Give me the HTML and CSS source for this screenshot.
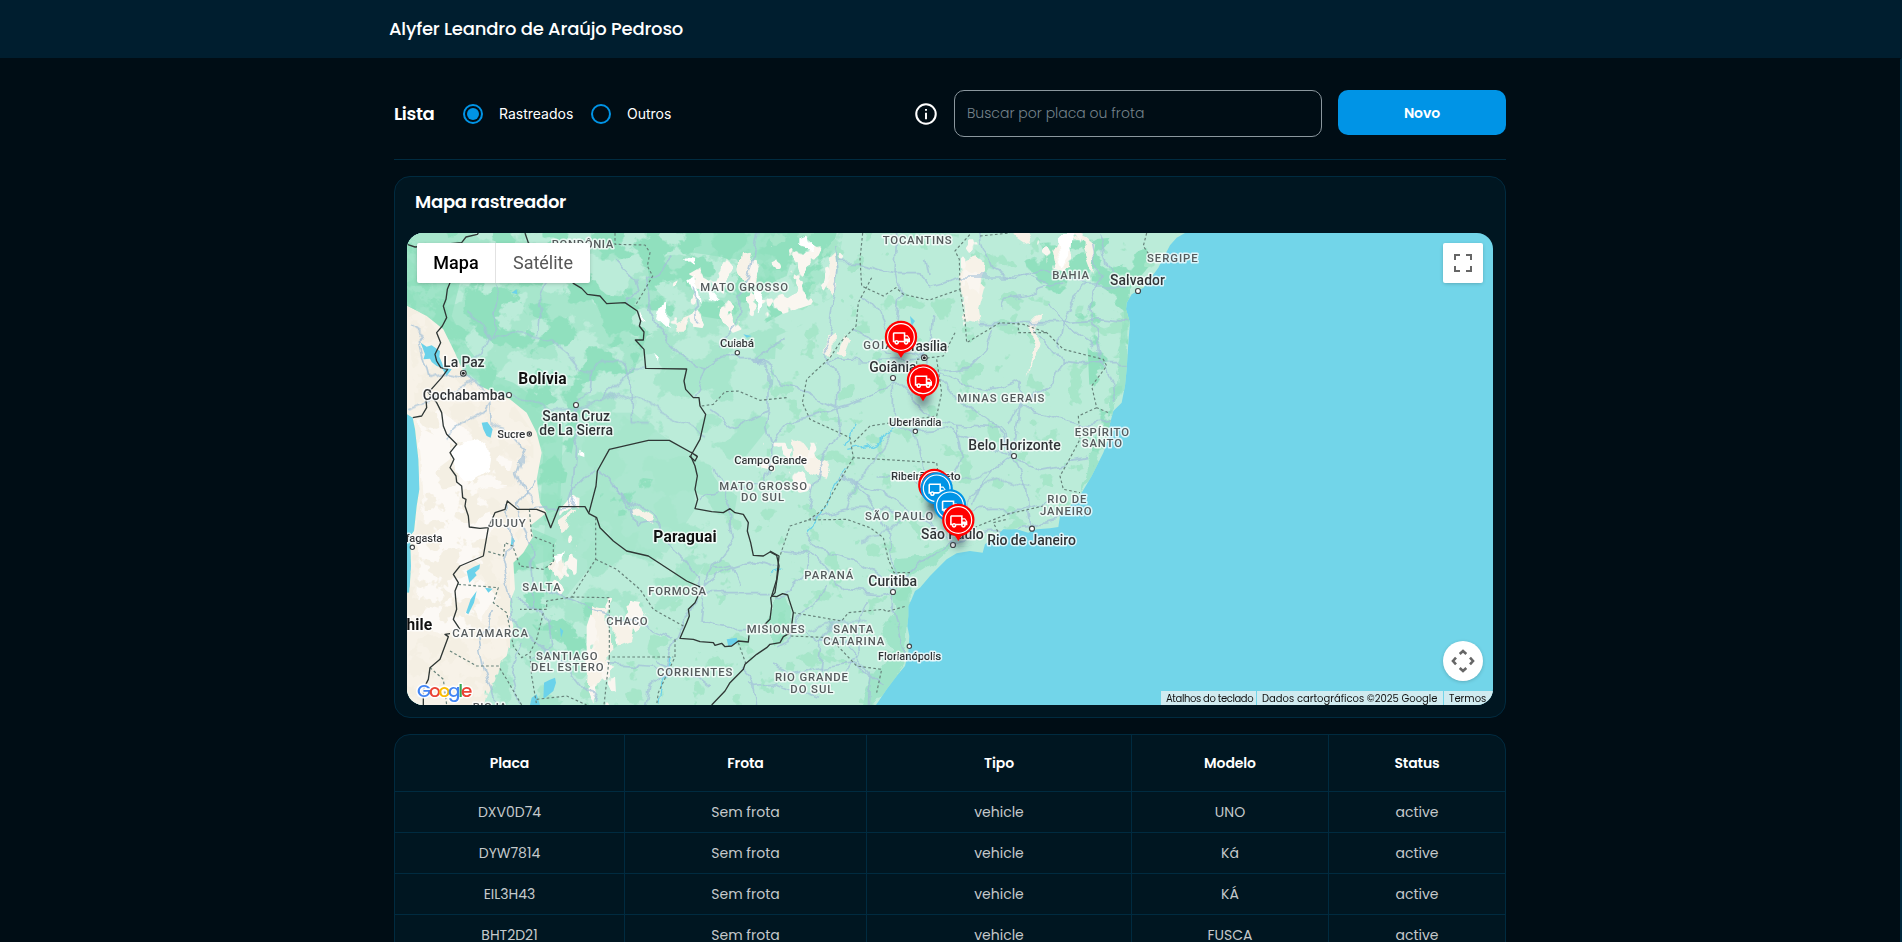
FILE: index.html
```html
<!DOCTYPE html>
<html lang="pt-BR">
<head>
<meta charset="utf-8">
<title>Mapa rastreador</title>
<link rel="stylesheet" href="styles.css">
</head>
<body>
<header class="topbar"><div class="topbar-inner"><span class="user-name">Alyfer Leandro de Araújo Pedroso</span></div></header>
<div class="scroll-track"></div>
<main class="page">
  <section class="toolbar">
    <h1 class="toolbar-title">Lista</h1>
    <div class="radio-group">
      <label class="radio"><span class="radio-dot radio-on"></span><span class="radio-text">Rastreados</span></label>
      <label class="radio"><span class="radio-dot"></span><span class="radio-text radio-text-b">Outros</span></label>
    </div>
    <svg class="info" viewBox="0 0 24 24"><circle cx="12" cy="12" r="9" fill="none" stroke="#fff" stroke-width="1.900"/><path d="M11.100 7.300h1.800v1.800h-1.800zM11.100 10.800h1.800v6h-1.800z" fill="#fff"/></svg>
    <div class="search"><span class="search-hint">Buscar por placa ou frota</span></div>
    <button class="btn"><span>Novo</span></button>
  </section>

  <section class="map-card">
    <h2 class="map-title">Mapa rastreador</h2>
    <div class="map">
      <svg class="map-canvas" viewBox="21 21 3258 1416">
        <defs>
          <filter id="mid" x="0" y="0" width="1" height="1" color-interpolation-filters="sRGB">
            <feTurbulence type="fractalNoise" baseFrequency=".009 .010" numOctaves="5" seed="8"/>
            <feColorMatrix values="0 0 0 0 .655  0 0 0 0 .902  0 0 0 0 .8  24 0 0 0 -11.7"/>
            <feComposite in2="SourceGraphic" operator="in"/>
          </filter>
          <filter id="deep" x="0" y="0" width="1" height="1" color-interpolation-filters="sRGB">
            <feTurbulence type="fractalNoise" baseFrequency=".010 .011" numOctaves="5" seed="21"/>
            <feColorMatrix values="0 0 0 0 .565  0 0 0 0 .88  0 0 0 0 .745  24 0 0 0 -12.4"/>
            <feComposite in2="SourceGraphic" operator="in"/>
          </filter>
          <filter id="sparse" x="0" y="0" width="1" height="1" color-interpolation-filters="sRGB">
            <feTurbulence type="fractalNoise" baseFrequency=".015" numOctaves="4" seed="5"/>
            <feColorMatrix values="0 0 0 0 .65  0 0 0 0 .9  0 0 0 0 .79  24 0 0 0 -15.3"/>
            <feComposite in2="SourceGraphic" operator="in"/>
          </filter>
          <filter id="sand" x="0" y="0" width="1" height="1" color-interpolation-filters="sRGB">
            <feTurbulence type="fractalNoise" baseFrequency=".022 .015" numOctaves="3" seed="3"/>
            <feColorMatrix values="0 0 0 0 .98  0 0 0 0 .965  0 0 0 0 .94  26 0 0 0 -14.8"/>
            <feComposite in2="SourceGraphic" operator="in"/>
          </filter>
          <filter id="dune" x="0" y="0" width="1" height="1" color-interpolation-filters="sRGB">
            <feTurbulence type="fractalNoise" baseFrequency=".017" numOctaves="4" seed="11"/>
            <feColorMatrix values="0 0 0 0 .957  0 0 0 0 .937  0 0 0 0 .89  24 0 0 0 -12"/>
            <feComposite in2="SourceGraphic" operator="in"/>
          </filter>
          <filter id="bend" filterUnits="userSpaceOnUse" x="0" y="0" width="2500" height="1460" color-interpolation-filters="sRGB">
            <feTurbulence type="fractalNoise" baseFrequency=".014" numOctaves="3" seed="4" result="n"/>
            <feDisplacementMap in="SourceGraphic" in2="n" scale="46" xChannelSelector="R" yChannelSelector="G"/>
          </filter>
          <filter id="soft" x="-1" y="-1" width="3" height="3"><feGaussianBlur stdDeviation="12"/></filter>
          <clipPath id="land"><path d="M21 21H2355L2330 35 2310 58 2292 92 2275 125 2250 160 2230 185 2195 205 2180 230 2178 250 2190 290 2185 350 2180 430 2175 480 2165 530 2140 555 2128 600 2125 640 2110 680 2095 710 2075 750 2045 800 2010 840 1980 870 1975 903 1950 907 1910 910 1885 920 1850 910 1810 910 1795 925 1755 955 1748 980 1710 975 1670 982 1640 1000 1610 1030 1590 1050 1560 1085 1545 1095 1535 1120 1525 1140 1525 1170 1522 1200 1528 1230 1525 1280 1515 1320 1490 1350 1460 1390 1440 1420 1428 1437H21V1100H28L33 1020 30 930 42 915 50 840 58 790 55 700 45 610 38 575 21 565Z"/></clipPath>
          <g id="truck"><path transform="translate(-28.5 -27) scale(2.35)" fill="#fff" d="M20 8h-3V4H3c-1.1 0-2 .9-2 2v11h2c0 1.66 1.34 3 3 3s3-1.34 3-3h6c0 1.66 1.34 3 3 3s3-1.34 3-3h2v-5l-3-4zm-.5 1.5 1.96 2.5H17V9.500h2.500zM6 18c-.55 0-1-.45-1-1s.45-1 1-1 1 .45 1 1-.45 1-1 1zm2.220-3c-.55-.61-1.330-1-2.220-1s-1.670.39-2.220 1H3V6h12v9H8.220zM18 18c-.55 0-1-.45-1-1s.45-1 1-1 1 .45 1 1-.45 1-1 1z"/></g>
          <g id="pin"><ellipse cx="0" cy="48" rx="22" ry="36" fill="#234" opacity=".5" filter="url(#soft)"/><circle r="48.500"/><path d="M-12 44H12L0 63Z"/><circle r="40" fill="none" stroke="#fff" stroke-width="3.500"/><use href="#truck" x="1.500" y="3"/></g>
        </defs>
        <rect x="21" y="21" width="3258" height="1416" fill="#72d5e9"/>
        <g clip-path="url(#land)">
          <rect x="21" y="21" width="2400" height="1416" fill="#bbecd9"/>
          <path filter="url(#mid)" d="M21 21H1330L1290 260 1130 330 1110 600 1030 700 1000 880 860 1100 600 1300 480 1437H21Z"/>
          <path fill="#a7e6cc" opacity=".75" d="M560 560L700 560 760 610 880 690 885 850 800 980 690 970 600 900 470 840 480 700ZM440 850L590 900 590 1000 500 1110 430 1120 430 950Z"/>
          <path filter="url(#deep)" d="M21 21H1310L1260 200 1080 300 900 270 740 330 700 440 560 470 540 560 480 850 440 900 370 700 180 450 21 240Z"/>
          <path fill="#91e0bf" opacity=".65" d="M21 60L120 60 180 170 155 270 200 360 260 440 340 470 440 540 490 590 480 850 420 870 430 680 380 560 250 480 190 430 130 330 21 240ZM900 21H1200L1160 150 1060 190 1010 100 880 80ZM360 960L400 910 470 940 460 1000 360 1030Z"/>
          <path filter="url(#deep)" d="M600 740L760 760 720 860 600 880ZM340 980L470 960 440 1120 580 1130 570 1300 450 1260 340 1130ZM1800 60L2330 21 2190 190 2180 500 2080 750 2060 300Z"/>
          <path filter="url(#sparse)" d="M1110 21H2300L2180 550 2000 850 1600 1000 1400 1437H500L1100 700Z"/>
          <path fill="#91e0bf" opacity=".65" filter="url(#bend)" d="M2170 240L2190 290 2180 430 2175 480 2150 540 2128 600 2145 440 2165 350ZM2128 620L2095 710 2030 800 2060 720ZM1745 950L1660 960 1600 1010 1530 1055 1450 1030 1490 1000 1570 990 1620 960 1700 955ZM1535 1075L1524 1230 1515 1320 1440 1420 1390 1437 1420 1350 1480 1270 1440 1220 1490 1150 1480 1100ZM1110 1105L1148 1103 1180 1160 1172 1220 1110 1255Z"/>
          <path fill="#f7f2e8" d="M21 240L80 270 130 310 165 380 190 440 240 480 330 520 380 560 410 620 425 680 410 760 420 830 440 860 390 900 400 930 370 980 340 1010 345 1090 325 1140 340 1200 320 1290 260 1340 250 1437H21V1100H28L33 1020 30 930 42 915 50 840 58 790 55 700 45 610 38 575 21 565Z"/>
          <path fill="#fcf9f5" filter="url(#bend)" d="M50 585L110 550 190 600 270 680 340 700 320 780 230 800 290 880 260 970 230 1060 290 1100 240 1190 170 1220 100 1210 40 1190 60 980 70 800Z"/>
          <path filter="url(#dune)" d="M21 240L80 270 200 450 330 520 400 620 400 850 330 1000 330 1270 250 1437H21V1100L70 760 150 700 150 650 50 600Z"/>
          <path fill="#fff" filter="url(#bend)" d="M150 660L230 640 280 680 270 740 220 770 160 740Z"/>
          <g fill="#f7f2e8" filter="url(#bend)">
            <path d="M1020 85L1045 80 1070 120 1065 180 1040 175 1015 120ZM1290 105L1310 85 1320 170 1300 215 1285 160ZM1690 95L1720 85 1750 110 1745 180 1725 255 1730 290 1695 280 1690 200ZM1960 60L1990 40 2015 75 2010 120 1975 130ZM1275 330L1302 320 1300 385 1280 375ZM1312 385L1340 325 1350 340 1330 390ZM1900 270L1920 260 1915 360 1880 440 1900 340ZM1180 640L1215 655 1250 700 1290 715 1270 760 1230 745 1190 700ZM480 880L520 850 500 900 480 925ZM450 1030L490 990 500 1040 470 1070ZM1830 21L1900 21 1880 55ZM2000 21L2090 60 2080 140 2050 60ZM580 1140L625 1150 630 1350 560 1400 570 1210ZM640 1170L700 1200 690 1240 640 1260ZM690 1125L750 1180 700 1140ZM700 840L760 880 750 900 705 860ZM818 290L870 270 850 305 820 305Z"/>
          </g>
          <path filter="url(#sand)" d="M1100 60L1300 60 1330 90 1250 230 1130 270 1000 320 800 290 820 170 960 90ZM1680 40H1750L1735 240 1690 300ZM1890 21H2050L2010 140 1920 120ZM1090 650L1270 650 1300 780 1200 800 1080 760ZM480 850L540 780 530 1040 480 1110 450 1060ZM590 1110L740 1130 720 1210 640 1260 650 1437H560V1200Z"/>
          <g fill="#fff" filter="url(#bend)">
            <path d="M855 110L880 90 875 125ZM865 160L885 150 900 235 880 200ZM795 225L808 220 800 300 780 285ZM920 180L960 230 930 220ZM1060 200L1090 190 1075 260ZM1195 40L1220 30 1230 70 1195 60ZM722 250L740 300 725 290ZM470 990L498 985 480 1015ZM505 815L525 810 520 840ZM535 665L550 680 550 690 535 685ZM760 375L775 385 768 400ZM1970 21L2015 21 2010 90 1990 120 1975 70Z"/>
          </g>
          <g fill="#6bd2ea">
            <path d="M62 350L80 362 95 358 120 375 118 392 130 420 155 430 140 450 125 425 110 420 95 408 90 398 70 400 75 385ZM245 590L262 588 278 610 272 635 260 630 250 610ZM200 1035L222 1022 240 1015 238 1028 225 1040 230 1048 208 1070ZM198 1160L212 1120 230 1095 222 1130 205 1165ZM255 1085L278 1088 265 1100ZM432 1370L448 1362 465 1355 468 1370 460 1395 430 1420ZM395 1415L410 1405 420 1437H390ZM980 1240L1010 1235 1015 1250 985 1260ZM1530 270L1545 285 1535 300ZM335 200L350 190 352 205ZM1030 325L1055 330 1040 335ZM335 930L345 945 332 965ZM480 1205L490 1215 483 1235Z"/>
          </g>
          <g class="rivers" filter="url(#bend)"><path d="M1345 730L1300 795 1255 870 1220 915M1345 670L1430 650 1490 610M1365 590L1340 655M1110 1050L1150 1035M820 1290L810 1320 780 1370 770 1437M1555 760L1600 770"/></g>
          <g class="roads" filter="url(#bend)">
            <path d="M21 310L60 340 90 460 140 440 200 455 260 500 330 512 390 530 450 550 530 545 600 525 650 500 700 520 860 600 915 630"/>
            <path d="M190 255L240 295 265 340 245 380 200 410 190 440M280 175L300 220 270 340M415 325L420 270 410 230 440 180M270 340L330 325 420 330 460 350 510 390 540 430 575 435 610 405 670 410 690 450 700 500 700 590 740 590"/>
            <path d="M575 435L570 500 535 530 520 610 530 660 525 740 510 850M600 525L650 470 700 430 730 430M140 640L190 590 240 560 260 530 265 590 320 615 350 650 370 680 350 740 370 790 410 830M21 540L90 520 160 500 220 470"/>
            <path d="M650 100L710 160 720 200 680 210 680 230M820 95L780 140 740 160 755 250 790 330 850 390 890 410 920 420 960 395 1060 395 1110 355 1160 340M1080 21L1045 150 1010 210 1010 300 960 360"/>
            <path d="M880 180L890 290M920 420L900 480 880 520M1060 395L1110 450 1110 560 1100 600 1115 660 1115 720 1090 770 1000 790 900 820M390 850L500 840 510 800 590 720M640 780L700 840 710 900 770 890 800 960"/>
            <path d="M1310 60L1320 140 1280 340 1290 400 1310 450 1310 540 1230 500 1140 480 1110 430 1050 395M1280 400L1400 405 1500 400 1570 395M1490 21L1485 140 1500 210 1490 300 1560 390 1595 360 1605 270"/>
            <path d="M1320 115L1380 115 1440 130 1480 140M1480 140L1560 140 1580 180 1690 150 1900 150 1940 180M1580 100L1590 150M1390 210L1440 270 1470 360 1570 395 1610 450 1660 510 1780 600 1840 690"/>
            <path d="M1480 460L1400 520 1310 545 1320 600 1250 740 1220 850M1480 460L1480 600 1545 620 1570 730 1640 770M1480 460L1530 510 1580 560 1660 600 1800 610 1840 690 1920 730 2070 700"/>
            <path d="M1610 440L1700 480 1780 490 1870 460 1860 550 1840 690M1740 21L1780 130 1840 160 1930 130 2040 180 2180 180M1730 290L1850 290 1970 290 2080 280 2185 290M1910 310L1990 400 1960 470 1860 540 1830 600"/>
            <path d="M2100 21L2130 120 2180 190M2080 50L2100 150 2070 250 2100 400 2140 480 2150 530M1940 230L1970 270 2010 310 2080 360M1810 250L1820 220 1870 210 1990 170"/>
            <path d="M2050 180L2000 260 1980 360M1990 400L2080 410 2180 410M1860 550L1980 580 2070 600 2130 590M1840 690L1880 770 1895 905M1840 690L1770 740 1680 860 1655 950M1540 620L1640 610 1720 640 1840 690"/>
            <path d="M1430 750L1530 750 1570 780 1670 870M1320 760L1450 800 1560 870 1655 950M1230 880L1330 850 1460 850 1570 890 1660 950M1330 750L1400 810 1460 910 1470 1000 1480 1090M1655 950L1560 1010 1480 1090 1480 1160 1500 1230 1520 1290"/>
            <path d="M1220 920L1260 970 1360 1000 1470 1080M1140 970L1240 980 1330 1090 1440 1100 1480 1090M1280 1080L1250 1140 1210 1160 1160 1240 1120 1260M1240 980L1200 1060 1150 1100 1110 1110M1410 1120L1370 1200 1380 1280 1320 1370"/>
            <path d="M1190 1200L1260 1240 1340 1250 1420 1340 1410 1437M1110 1320L1180 1350 1270 1320 1380 1310 1450 1380M1050 1380L1130 1370 1260 1420M1020 1330L1060 1370 1070 1437M1655 950L1750 920 1880 905 1970 880M1680 860L1780 850 1870 850 1990 810"/>
            <path d="M600 720L650 790 770 880 810 960 860 1010 910 1080 900 1190 980 1205 1050 1205M910 1080L940 1020 1000 940 990 850 940 720M910 1080L960 1040 1060 1010 1130 1030M910 1100L1100 1100M940 1030L1000 1020 1030 1080"/>
            <path d="M900 1090L850 1190 830 1240 800 1340 740 1390 730 1437M820 1240L700 1190 600 1160 510 1120 400 1080 390 960 350 840 400 760M400 1080L410 1140 440 1180 450 1260 400 1300M320 840L330 930 310 1000 330 1090 340 1180 410 1250 500 1320 590 1437"/>
            <path d="M280 1160L260 1220 240 1240 260 1340 290 1437M360 1250L330 1320 360 1437M410 1140L350 1120M770 1300L850 1330 930 1390M630 1310L800 1320"/>
            <path d="M1360 310L1410 340 1470 380M1110 560L1000 600 930 550M1310 545L1170 590 1115 660M1780 300L1760 370 1700 430 1600 440M1670 600L1690 690 1640 770"/>
            <path d="M1340 850L1370 770 1420 700 1480 620M1520 880L1470 920 1380 940M1590 800L1650 760 1770 740M1720 840L1740 780 1810 760 1900 780M1400 1190L1300 1190 1230 1210M1260 1330L1270 1240 1300 1190"/>
          </g>
          <g class="states">
            <path d="M645 21V55L735 57 750 80 742 120 758 150 735 190 705 240M905 540L940 535 975 497 1015 495 1080 523 1160 515"/>
            <path d="M1388 21L1380 100 1385 180 1450 210 1488 185 1510 205 1588 222 1680 190 1678 100 1665 75 1710 25M1680 190L1695 280 1700 350 1800 290 1870 295 1940 320 1990 370 2110 400 2120 420 2075 480 2090 545 2125 560M1415 155L1375 230 1368 300 1320 350 1290 395 1220 460 1207 530 1230 580 1350 635 1360 695 1610 710 1620 790M1665 320L1630 390 1550 400V440M1610 400L1625 500 1610 570 1410 600 1360 650M2090 545L2035 570 2040 640 2000 715 1980 750 1990 790 2040 800M1855 290V320L1940 320"/>
            <path d="M1360 695L1310 780 1270 850 1225 882 1170 900 1140 990M1225 882L1340 880 1410 905 1450 935 1465 1000 1482 1040 1530 1040M1180 1160L1325 1185 1345 1160 1450 1150 1460 1157 1520 1140M1172 1230L1290 1235 1370 1320 1445 1330 1430 1400M1710 910L1820 865 1930 840M1800 930L1780 890 1820 880"/>
            <path d="M388 850L395 930 460 955V1010L430 1030 360 1020 338 960 315 950 310 990 258 975M587 875V1000L515 1113 440 1125V1150L360 1150M587 1000L650 1030 720 1090 760 1150 850 1200M515 1113L628 1115V1293H820M628 1293L612 1437M175 1075L295 1085 280 1130 320 1160 340 1260 365 1295 390 1280 410 1240 430 1160M825 1240V1293L775 1400 770 1437M150 1275L230 1320H295L320 1360 365 1437M390 1290L395 1350 410 1437M90 1325L130 1360 140 1437"/>
            <path d="M2240 21L2230 60 2250 90M1740 30L1830 21M410 1420L500 1410 560 1437M1015 1250L1040 1320"/>
          </g>
          <g class="borders">
            <path d="M21 55L45 63 185 50 198 33 232 25 235 21M375 21L385 50 440 100 520 172 545 187 562 205 600 210 620 233 675 230 712 255 722 285 718 300 732 318 730 342H706L732 370 737 427 860 429 852 465 857 490 880 515 897 515 900 540 917 565 900 640 872 690 885 720 892 750 885 790 893 820 885 848 935 857 970 860 990 848 1005 860 1030 865 1045 890 1042 915 1052 950 1060 988 1090 990 1110 978 1130 988 1137 1020 1125 1100 1112 1115 1115 1140 1110 1180 1095 1195 1100 1190"/>
            <path d="M150 170L142 190 138 220 130 240 140 275 127 300 110 320 122 350 105 385 110 405 122 425 143 430 125 455 85 500 110 530 125 560 130 600 140 625 170 655 150 680 162 700 150 725 168 750 170 768 185 780 188 815 198 820 195 840 205 870 208 903 240 907 265 905 285 860 315 850 322 825 352 850H410L435 860 452 905 477 842H555L567 863 590 875 600 905 640 945 680 975 745 990 860 1065 905 1085 885 1130 865 1150 868 1170 860 1190 840 1237 880 1240 900 1247 940 1250 945 1258 965 1252 975 1262 995 1260 1015 1245 1045 1248 1047 1228"/>
            <path d="M38 575L65 570 80 545 78 520M892 690L808 643H745L628 670 592 735 588 780 567 860M872 678L892 692 885 705 868 690M265 905L250 990 180 1020 160 1045 175 1070 165 1095 170 1150 160 1180 180 1210M150 1223L135 1225 145 1232 120 1300 90 1325 85 1360 70 1390 70 1437"/>
            <path d="M1110 975L1137 990 1130 1060 1115 1110 1130 1112 1148 1103 1163 1107 1167 1120 1180 1160 1172 1220 1150 1232 1140 1250 1110 1255 1100 1265 1070 1285 1035 1315 1030 1330 990 1370 975 1395 935 1437"/>
          </g>
        </g>

        <g class="spots"><circle cx="190" cy="442" r="8.500"/><circle cx="327" cy="507" r="7.500"/><circle cx="528" cy="537" r="7.500"/><circle cx="388" cy="624" r="6.500"/><circle cx="1012" cy="380" r="6.500"/><circle cx="1114" cy="727" r="6.500"/><circle cx="1573" cy="395" r="8.500"/><circle cx="1479" cy="456" r="7.500"/><circle cx="1546" cy="616" r="6.500"/><circle cx="1842" cy="690" r="7.500"/><circle cx="2214" cy="195" r="7.500"/><circle cx="1659" cy="957" r="7.500"/><circle cx="1896" cy="908" r="7.500"/><circle cx="1479" cy="1098" r="7.500"/><circle cx="1528" cy="1261" r="6.500"/><circle cx="37" cy="964" r="6.500"/></g>
        <g fill="#222"><circle cx="190" cy="442" r="4.500"/><circle cx="1573" cy="395" r="4.500"/><circle cx="388" cy="624" r="3"/></g>
        <g class="state-names">
          <text x="455" y="67" textLength="185">RONDÔNIA</text><text x="901" y="194" textLength="263">MATO GROSSO</text><text x="1448" y="53" textLength="207">TOCANTINS</text><text x="1390" y="368" textLength="112">GOIÁS</text><text x="1957" y="158" textLength="110">BAHIA</text><text x="2241" y="109" textLength="152">SERGIPE</text><text x="1672" y="527" textLength="261">MINAS GERAIS</text><text x="2024" y="629" textLength="163">ESPÍRITO</text><text x="2045" y="662" textLength="121">SANTO</text>
          <text x="958" y="791" textLength="263">MATO GROSSO</text><text x="1023" y="824" textLength="129">DO SUL</text><text x="1395" y="881" textLength="205">SÃO PAULO</text><text x="1942" y="832" textLength="117">RIO DE</text><text x="1920" y="866" textLength="155">JANEIRO</text><text x="1213" y="1058" textLength="147">PARANÁ</text><text x="1300" y="1222" textLength="120">SANTA</text><text x="1270" y="1256" textLength="183">CATARINA</text><text x="1125" y="1366" textLength="219">RIO GRANDE</text><text x="1171" y="1400" textLength="129">DO SUL</text>
          <text x="264" y="902" textLength="113">JUJUY</text><text x="367" y="1094" textLength="115">SALTA</text><text x="745" y="1106" textLength="173">FORMOSA</text><text x="619" y="1196" textLength="124">CHACO</text><text x="157" y="1232" textLength="227">CATAMARCA</text><text x="1040" y="1222" textLength="174">MISIONES</text><text x="408" y="1301" textLength="185">SANTIAGO</text><text x="393" y="1334" textLength="218">DEL ESTERO</text><text x="771" y="1349" textLength="226">CORRIENTES</text><text x="218" y="1454" textLength="102">RIOJA</text>
        </g>
        <g class="cities">
          <text x="130" y="423" textLength="124">La Paz</text><text x="68" y="521" textLength="247">Cochabamba</text><text x="427" y="584" textLength="203">Santa Cruz</text><text x="418" y="626" textLength="221">de La Sierra</text><text x="2130" y="177" textLength="165">Salvador</text><text x="1507" y="375" textLength="135">Brasília</text><text x="1408" y="437" textLength="142">Goiânia</text><text x="1705" y="672" textLength="277">Belo Horizonte</text><text x="1563" y="939" textLength="188">São Paulo</text><text x="1762" y="956" textLength="266">Rio de Janeiro</text><text x="1405" y="1079" textLength="146">Curitiba</text>
        </g>
        <g class="towns">
          <text x="960" y="362" textLength="102">Cuiabá</text><text x="292" y="635" textLength="84">Sucre</text><text x="1003" y="713" textLength="218">Campo Grande</text><text x="1467" y="599" textLength="158">Uberlândia</text><text x="1473" y="763" textLength="209">Ribeirão Preto</text><text x="1434" y="1301" textLength="190">Florianópolis</text><text x="-52" y="947" textLength="180">Antofagasta</text>
        </g>
        <g class="countries"><text x="355" y="475" textLength="145">Bolívia</text><text x="760" y="949" textLength="190">Paraguai</text><text x="-12" y="1213" textLength="109">Chile</text></g>
        <text class="brand brand-halo" x="51" y="1412" textLength="166" aria-hidden="true">Google</text>
        <text class="brand" x="51" y="1412" textLength="166"><tspan fill="#4285f4">G</tspan><tspan fill="#ea4335">o</tspan><tspan fill="#fbbc04">o</tspan><tspan fill="#4285f4">g</tspan><tspan fill="#34a853">l</tspan><tspan fill="#ea4335">e</tspan></text>
        <use href="#pin" x="1503" y="333" fill="#f00"/><use href="#pin" x="1569" y="463" fill="#f00"/><use href="#pin" x="1603" y="777" fill="#f00"/><use href="#pin" x="1610" y="787" fill="#0094e6"/><use href="#pin" x="1650" y="838" fill="#0094e6"/><use href="#pin" x="1675" y="882" fill="#f00"/>
      </svg>
      <div class="map-types"><span class="type type-on">Mapa</span><span class="type">Satélite</span></div>
      <div class="fullscreen"><svg width="18" height="18" viewBox="0 0 18 18"><path fill="#666" d="M0 0v6h2V2h4V0H0zm16 0h-4v2h4v4h2V0h-2zm0 16h-4v2h6v-6h-2v4zM2 12H0v6h6v-2H2v-4z"/></svg></div>
      <div class="pan"><svg width="24" height="24" viewBox="0 0 24 24"><g fill="none" stroke="#666" stroke-width="2.600"><path d="M8.700 5L12 2l3.300 3M8.700 19L12 22l3.300-3M5 8.700L2 12l3 3.300M19 8.700L22 12l-3 3.300"/></g></svg></div>
      <div class="credits"><span class="credit credit-a">Atalhos do teclado</span><span class="credit credit-b">Dados cartográficos ©2025 Google</span><span class="credit credit-c">Termos</span></div>
    </div>
  </section>

  <section class="table">
    <div class="row row-head"><div>Placa</div><div>Frota</div><div>Tipo</div><div>Modelo</div><div>Status</div></div>
    <div class="row"><div>DXV0D74</div><div>Sem frota</div><div>vehicle</div><div>UNO</div><div>active</div></div>
    <div class="row"><div>DYW7814</div><div>Sem frota</div><div>vehicle</div><div>Ká</div><div>active</div></div>
    <div class="row"><div>EIL3H43</div><div>Sem frota</div><div>vehicle</div><div>KÁ</div><div>active</div></div>
    <div class="row"><div>BHT2D21</div><div>Sem frota</div><div>vehicle</div><div>FUSCA</div><div>active</div></div>
  </section>
</main>
</body>
</html>
```

FILE: styles.css
```css
* { box-sizing: border-box; }
html, body { height: 100%; overflow: hidden; }
body { margin: 0; background: #000d15; color: #fff; font-family: Poppins, Inter, sans-serif; }
h1, h2 { margin: 0; }
.topbar { height: 58px; background: #001e2f; }
.topbar-inner { width: 1124px; margin: 0 auto; height: 57px; display: flex; align-items: center; }
.user-name { font-size: 18px; font-weight: 500; letter-spacing: -.2px; white-space: nowrap; }
.scroll-track { position: absolute; right: 0; top: 58px; width: 2px; height: 884px; background: #00283c; border-top-left-radius: 4px; }
.page { width: 1112px; margin-left: 394px; }
.toolbar { height: 102px; border-bottom: 1px solid #002b40; display: flex; align-items: flex-start; padding-top: 32px; }
.toolbar-title { width: 69px; font-size: 18px; font-weight: 600; line-height: 47px; letter-spacing: -.4px; }
.radio-group { display: flex; gap: 18px; height: 48px; align-items: center; flex: 1; }
.radio { display: flex; align-items: center; gap: 16px; }
.radio-dot { width: 20px; height: 20px; border: 2px solid #0094e6; border-radius: 50%; display: flex; align-items: center; justify-content: center; }
.radio-on::after { content: ""; width: 12px; height: 12px; border-radius: 50%; background: #0094e6; }
.radio-text { font-family: Inter, sans-serif; font-size: 14px; line-height: 18px; width: 74px; padding-bottom: 1px; white-space: nowrap; }
.radio-text-b { width: 46px; }
.info { width: 26px; height: 26px; margin: 11px 15px 0 0; }
.search { width: 368px; height: 47px; border: 1px solid #8b979e; border-radius: 10px; padding: 0 12px; display: flex; align-items: center; margin-right: 16px; }
.search-hint { color: #75838b; font-size: 14px; font-weight: 300; white-space: nowrap; }
.btn { width: 168px; height: 45px; border: 0; border-radius: 10px; background: #0094e6; color: #fff; padding-top: 3px; font: 600 14px Poppins, Inter, sans-serif; letter-spacing: -.1px; }
.map-card { margin-top: 16px; height: 542px; border: 1px solid #002b40; border-radius: 16px; background: #001621; padding: 0 12px; }
.map-title { font-size: 18px; font-weight: 600; line-height: 50px; height: 56px; padding-left: 8px; letter-spacing: -.25px; }
.map { position: relative; width: 1086px; height: 472px; border-radius: 16px; overflow: hidden; }
.map-canvas { display: block; width: 1086px; height: 472px; }
.roads path { fill: none; stroke: #a3c0d8; stroke-width: 5; opacity: .75; stroke-linejoin: round; }
.rivers path { fill: none; stroke: #6bd2ea; stroke-width: 4; }
.states path { fill: none; stroke: #66827a; stroke-width: 3.500; stroke-dasharray: 8 7; stroke-linejoin: round; }
.borders path { fill: none; stroke: #2f3735; stroke-width: 4; stroke-linejoin: round; }
.map-canvas text { font-family: Roboto, sans-serif; paint-order: stroke; stroke: #fff; stroke-opacity: .75; stroke-width: 9; stroke-linejoin: round; font-weight: 500; }
.state-names { font-size: 34px; fill: #565b5d; }
.cities { font-size: 42px; fill: #303336; }
.towns { font-size: 35px; fill: #303336; }
.map-canvas .countries text { font-size: 47px; fill: #111; font-weight: 700; }
.map-canvas .brand { font-family: Poppins, sans-serif; font-size: 55px; stroke: none; }
.map-canvas .brand-halo { fill: #fff; stroke: #fff; stroke-opacity: .9; stroke-width: 9; }
.spots circle { fill: #fff; stroke: #404648; stroke-width: 3.500; }
.map-types { position: absolute; left: 10px; top: 10px; height: 40px; width: 173px; display: flex; background: #fff; border-radius: 2px; box-shadow: 0 1px 4px -1px rgba(0,0,0,.3); font: 18px Roboto, sans-serif; line-height: 40px; text-align: center; }
.type { flex: 1; color: #565656; }
.type-on { flex: 0 0 79px; color: #000; font-weight: 500; border-right: 1px solid #e2e2e2; }
.fullscreen { position: absolute; right: 10px; top: 10px; width: 40px; height: 40px; background: #fff; border-radius: 2px; box-shadow: 0 1px 4px -1px rgba(0,0,0,.3); display: flex; align-items: center; justify-content: center; }
.pan { position: absolute; right: 10px; bottom: 24px; width: 40px; height: 40px; background: #fff; border-radius: 50%; box-shadow: 0 1px 4px -1px rgba(0,0,0,.3); display: flex; align-items: center; justify-content: center; }
.credits { position: absolute; right: 0; bottom: 0; height: 14px; display: flex; gap: 1px; color: #111; font-size: 10px; line-height: 15px; white-space: nowrap; }
.credit { background: #d0ebf0; padding-left: 5px; height: 14px; }
.credit-a { width: 95px; letter-spacing: -.4px; }
.credit-b { width: 186px; }
.credit-c { width: 49px; }
.table { margin-top: 16px; border: 1px solid #002b40; border-radius: 16px 16px 0 0; background: #001621; overflow: hidden; }
.row { display: grid; grid-template-columns: 230px 242px 265px 197px 1fr; height: 41px; border-bottom: 1px solid #002b40; color: #c5c9cb; font-size: 14px; }
.row > div { display: flex; align-items: center; justify-content: center; border-right: 1px solid #002b40; white-space: nowrap; }
.row > div:last-child { border-right: 0; }
.row-head { height: 57px; color: #fff; font-weight: 600; letter-spacing: -.1px; }
```
